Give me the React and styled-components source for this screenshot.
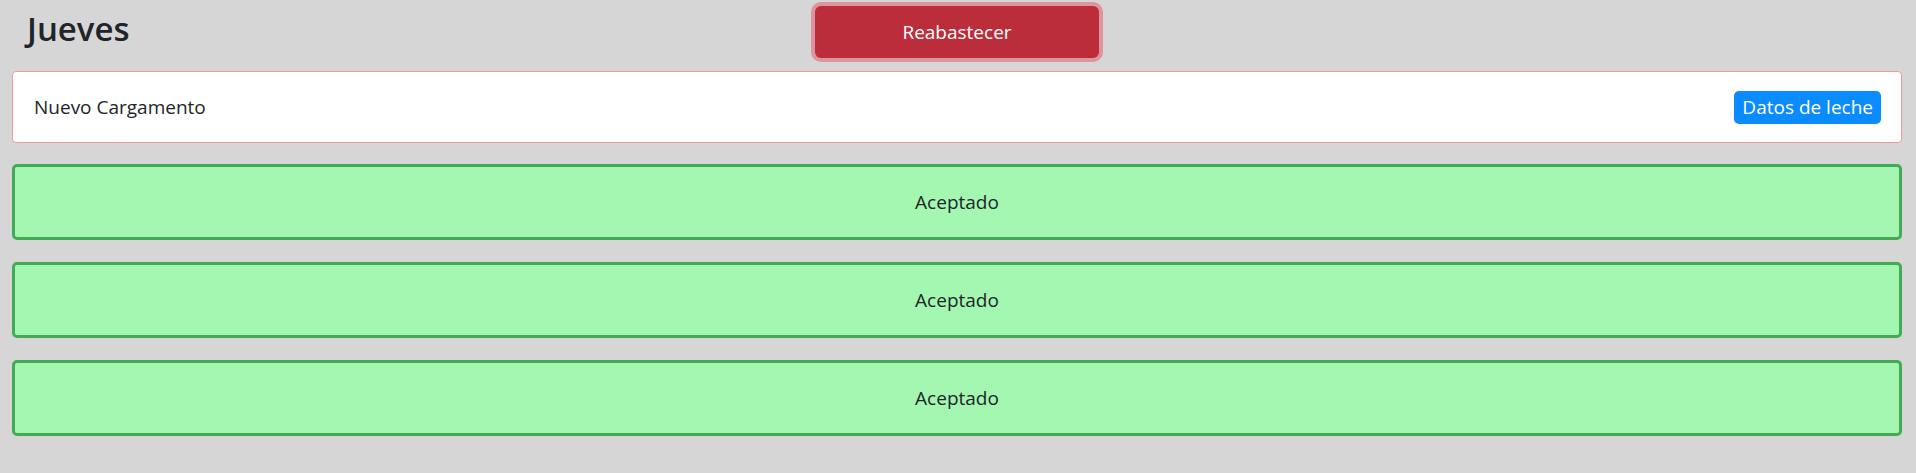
import styled, { createGlobalStyle } from "styled-components";

const GlobalStyle = createGlobalStyle`
    body {
        margin: 0;
        background-color: #d6d6d6;
        font-family: "Open Sans", "Noto Sans", sans-serif;
        color: #212529;
    }
`;

const Page = styled.div`
    padding: 0 14px 0 12px;
`;

const Header = styled.div`
    display: grid;
    grid-template-columns: 1fr auto 1fr;
    align-items: center;
    height: 71px;
`;

const Title = styled.h2`
    margin: 0 0 8px 15px;
    font-size: 33px;
    font-weight: 600;
    align-self: start;
    padding-top: 6px;
`;

const DangerButton = styled.button`
    width: 284px;
    height: 52px;
    margin-bottom: 7px;
    border: none;
    border-radius: 6px;
    background-color: #bb2d3b;
    color: #fff;
    font-family: inherit;
    font-size: 19px;
    box-shadow: 0 0 0 4px rgba(225, 83, 97, 0.5);
`;

const Card = styled.div`
    display: flex;
    align-items: center;
    justify-content: space-between;
    height: 70px;
    padding: 0 20px 0 21px;
    background-color: #fff;
    border: 1px solid #f29a9a;
    border-radius: 4px;
    font-size: 19px;
`;

const Badge = styled.span`
    padding: 3px 8px 4px;
    border-radius: 5px;
    background-color: #0a8bff;
    color: #fff;
    font-size: 19px;
`;

const List = styled.div`
    display: flex;
    flex-direction: column;
    gap: 22px;
    margin-top: 21px;
`;

const StatusBox = styled.div`
    display: flex;
    align-items: center;
    justify-content: center;
    height: 70px;
    background-color: ${(p) => (p.$accepted ? "#a3f7b1" : "#f7a3a3")};
    border: 3px solid ${(p) => (p.$accepted ? "#44aa55" : "#aa4444")};
    border-radius: 5px;
    font-size: 19px;
`;

const statuses = ["Aceptado", "Aceptado", "Aceptado"];

export default function App() {
    return (
        <Page>
            <GlobalStyle />
            <Header>
                <Title>Jueves</Title>
                <DangerButton>Reabastecer</DangerButton>
                <div />
            </Header>
            <Card>
                <span>Nuevo Cargamento</span>
                <Badge>Datos de leche</Badge>
            </Card>
            <List>
                {statuses.map((s, i) => (
                    <StatusBox key={i} $accepted>
                        {s}
                    </StatusBox>
                ))}
            </List>
        </Page>
    );
}
